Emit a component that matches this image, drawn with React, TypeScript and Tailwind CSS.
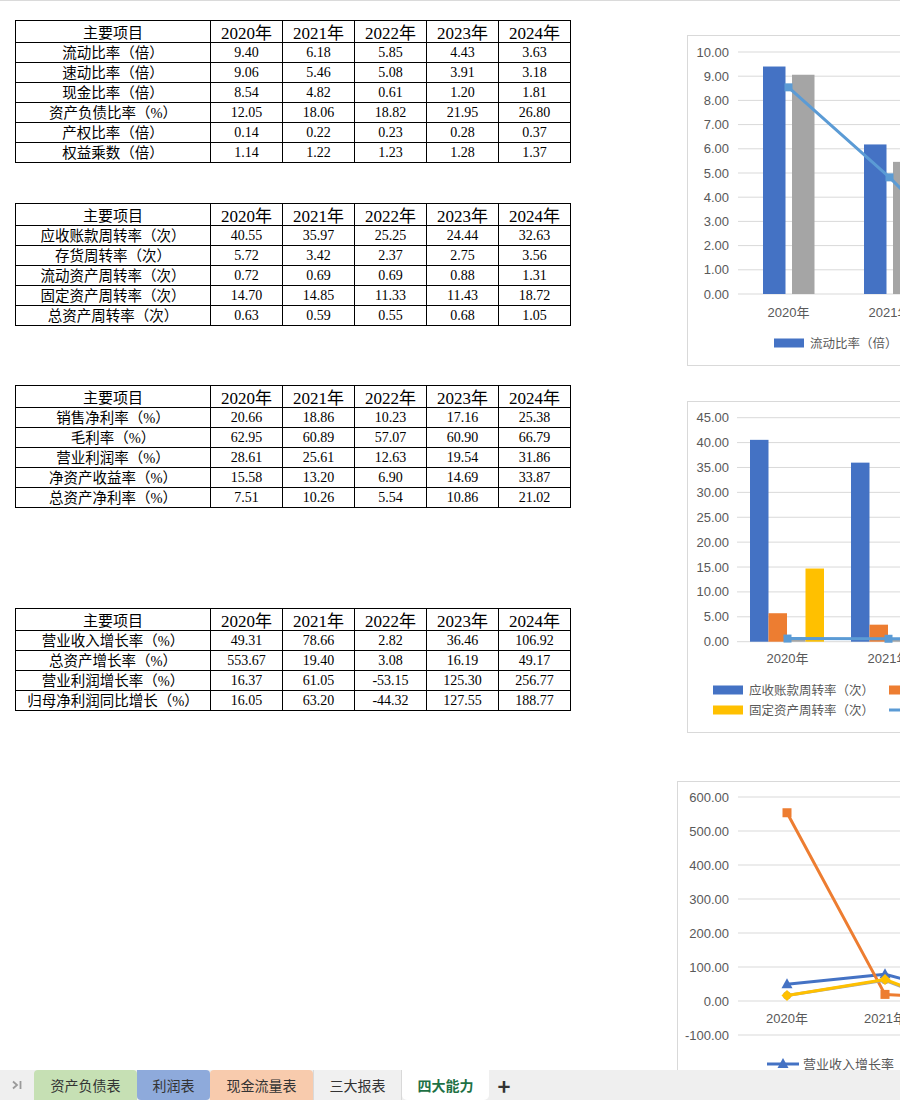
import React from 'react'

const years = ['2020年', '2021年', '2022年', '2023年', '2024年']

const solvency = [
  ['流动比率（倍）', '9.40', '6.18', '5.85', '4.43', '3.63'],
  ['速动比率（倍）', '9.06', '5.46', '5.08', '3.91', '3.18'],
  ['现金比率（倍）', '8.54', '4.82', '0.61', '1.20', '1.81'],
  ['资产负债比率（%）', '12.05', '18.06', '18.82', '21.95', '26.80'],
  ['产权比率（倍）', '0.14', '0.22', '0.23', '0.28', '0.37'],
  ['权益乘数（倍）', '1.14', '1.22', '1.23', '1.28', '1.37'],
]

const operation = [
  ['应收账款周转率（次）', '40.55', '35.97', '25.25', '24.44', '32.63'],
  ['存货周转率（次）', '5.72', '3.42', '2.37', '2.75', '3.56'],
  ['流动资产周转率（次）', '0.72', '0.69', '0.69', '0.88', '1.31'],
  ['固定资产周转率（次）', '14.70', '14.85', '11.33', '11.43', '18.72'],
  ['总资产周转率（次）', '0.63', '0.59', '0.55', '0.68', '1.05'],
]

const profit = [
  ['销售净利率（%）', '20.66', '18.86', '10.23', '17.16', '25.38'],
  ['毛利率（%）', '62.95', '60.89', '57.07', '60.90', '66.79'],
  ['营业利润率（%）', '28.61', '25.61', '12.63', '19.54', '31.86'],
  ['净资产收益率（%）', '15.58', '13.20', '6.90', '14.69', '33.87'],
  ['总资产净利率（%）', '7.51', '10.26', '5.54', '10.86', '21.02'],
]

const growth = [
  ['营业收入增长率（%）', '49.31', '78.66', '2.82', '36.46', '106.92'],
  ['总资产增长率（%）', '553.67', '19.40', '3.08', '16.19', '49.17'],
  ['营业利润增长率（%）', '16.37', '61.05', '-53.15', '125.30', '256.77'],
  ['归母净利润同比增长（%）', '16.05', '63.20', '-44.32', '127.55', '188.77'],
]

const C = {
  blue: '#4472c4',
  orange: '#ed7d31',
  gray: '#a5a5a5',
  yellow: '#ffc000',
  sky: '#5b9bd5',
  grid: '#d9d9d9',
  text: '#595959',
}

const num = (rows: string[][], i: number) => rows[i].slice(1).map(Number)

const SheetTable = ({ rows, className }: { rows: string[][]; className: string }) => (
  <div
    className={`grid grid-cols-[195px_72px_72px_72px_72px_72px] w-[556px] border-l border-t border-black text-black font-['Liberation_Serif','Noto_Sans_CJK_SC',serif] ${className}`}
  >
    <div className="h-[22px] border-r border-b border-black flex items-center justify-center pt-[4px] text-[15px] leading-none">
      主要项目
    </div>
    {years.map((y) => (
      <div
        key={y}
        className="h-[22px] border-r border-b border-black flex items-center justify-center pt-[3px] text-[17px] leading-none"
      >
        {y}
      </div>
    ))}
    {rows.map((row) =>
      row.map((cell, i) => (
        <div
          key={row[0] + i}
          className={`h-[20px] border-r border-b border-black flex items-center justify-center pt-[1px] leading-none whitespace-nowrap ${i === 0 ? 'text-[14.5px]' : 'text-[14px]'}`}
        >
          {cell}
        </div>
      ))
    )}
  </div>
)

const Square = ({ x, y, color, s = 8 }: { x: number; y: number; color: string; s?: number }) => (
  <rect x={x - s / 2} y={y - s / 2} width={s} height={s} fill={color} />
)

const Swatch = ({ x, y, color }: { x: number; y: number; color: string }) => (
  <rect x={x} y={y - 4.5} width={30} height={9} fill={color} />
)

const LiquidityChart = () => {
  const y = (v: number) => 258 - v * 24.2
  const cx = (i: number) => 100.5 + i * 101
  const cur = num(solvency, 0)
  const quick = num(solvency, 1)
  const cash = num(solvency, 2)
  return (
    <div className="ml-[10px] w-[600px] h-[331px] shrink-0 border border-[#d9d9d9] bg-white">
      <svg width="598" height="329" className="block font-['Liberation_Sans','Noto_Sans_CJK_SC',sans-serif]">
        {Array.from({ length: 11 }, (_, v) => (
          <g key={v}>
            <line x1={50} x2={598} y1={y(v)} y2={y(v)} stroke={C.grid} />
            <text x={41} y={y(v) + 4.5} textAnchor="end" fontSize={13} fill={C.text}>
              {v.toFixed(2)}
            </text>
          </g>
        ))}
        {cur.map((v, i) => (
          <rect key={'c' + i} x={cx(i) - 25.5} y={y(v)} width={22.5} height={y(0) - y(v)} fill={C.blue} />
        ))}
        {quick.map((v, i) => (
          <rect key={'q' + i} x={cx(i) + 3.5} y={y(v)} width={22.5} height={y(0) - y(v)} fill={C.gray} />
        ))}
        <polyline
          points={cash.map((v, i) => `${cx(i)},${y(v)}`).join(' ')}
          fill="none"
          stroke={C.sky}
          strokeWidth={3}
          strokeLinejoin="round"
        />
        {cash.map((v, i) => (
          <Square key={'m' + i} x={cx(i)} y={y(v)} color={C.sky} />
        ))}
        {years.map((yr, i) => (
          <text key={yr} x={cx(i)} y={281} textAnchor="middle" fontSize={13} fill={C.text}>
            {yr}
          </text>
        ))}
        <Swatch x={86} y={307} color={C.blue} />
        <text x={122} y={312} fontSize={12.5} fill={C.text}>流动比率（倍）</text>
        <Swatch x={228} y={307} color={C.gray} />
        <text x={264} y={312} fontSize={12.5} fill={C.text}>速动比率（倍）</text>
        <line x1={370} x2={400} y1={307} y2={307} stroke={C.sky} strokeWidth={3} />
        <Square x={385} y={307} color={C.sky} s={7} />
        <text x={406} y={312} fontSize={12.5} fill={C.text}>现金比率（倍）</text>
      </svg>
    </div>
  )
}

const TurnoverChart = () => {
  const y = (v: number) => 239.7 - v * 4.978
  const cx = (i: number) => 99.5 + i * 101
  const bars = [
    { data: num(operation, 0), color: C.blue },
    { data: num(operation, 1), color: C.orange },
    { data: num(operation, 2), color: C.gray },
    { data: num(operation, 3), color: C.yellow },
  ]
  const total = num(operation, 4)
  return (
    <div className="ml-[10px] mt-[35px] w-[600px] h-[332px] shrink-0 border border-[#d9d9d9] bg-white">
      <svg width="598" height="330" className="block font-['Liberation_Sans','Noto_Sans_CJK_SC',sans-serif]">
        {Array.from({ length: 10 }, (_, k) => (
          <g key={k}>
            <line x1={49} x2={598} y1={y(k * 5)} y2={y(k * 5)} stroke={C.grid} />
            <text x={41} y={y(k * 5) + 4.5} textAnchor="end" fontSize={13} fill={C.text}>
              {(k * 5).toFixed(2)}
            </text>
          </g>
        ))}
        {bars.map((b, k) =>
          b.data.map((v, i) => (
            <rect
              key={k + '-' + i}
              x={cx(i) - 37.5 + k * 18.5}
              y={y(v)}
              width={18.5}
              height={y(0) - y(v)}
              fill={b.color}
            />
          ))
        )}
        <polyline
          points={total.map((v, i) => `${cx(i)},${y(v)}`).join(' ')}
          fill="none"
          stroke={C.sky}
          strokeWidth={3}
        />
        {total.map((v, i) => (
          <Square key={'t' + i} x={cx(i)} y={y(v)} color={C.sky} />
        ))}
        {years.map((yr, i) => (
          <text key={yr} x={cx(i)} y={261} textAnchor="middle" fontSize={13} fill={C.text}>
            {yr}
          </text>
        ))}
        <Swatch x={25} y={288} color={C.blue} />
        <text x={61} y={293} fontSize={12.5} fill={C.text}>应收账款周转率（次）</text>
        <Swatch x={201} y={288} color={C.orange} />
        <text x={237} y={293} fontSize={12.5} fill={C.text}>存货周转率（次）</text>
        <Swatch x={352} y={288} color={C.gray} />
        <text x={388} y={293} fontSize={12.5} fill={C.text}>流动资产周转率（次）</text>
        <Swatch x={25} y={308} color={C.yellow} />
        <text x={61} y={313} fontSize={12.5} fill={C.text}>固定资产周转率（次）</text>
        <line x1={201} x2={231} y1={308} y2={308} stroke={C.sky} strokeWidth={3} />
        <Square x={216} y={308} color={C.sky} s={7} />
        <text x={237} y={313} fontSize={12.5} fill={C.text}>总资产周转率（次）</text>
      </svg>
    </div>
  )
}

const Triangle = ({ x, y, color }: { x: number; y: number; color: string }) => (
  <polygon points={`${x},${y - 6} ${x - 5.5},${y + 4} ${x + 5.5},${y + 4}`} fill={color} />
)

const Diamond = ({ x, y, color }: { x: number; y: number; color: string }) => (
  <polygon points={`${x},${y - 5.5} ${x + 5.5},${y} ${x},${y + 5.5} ${x - 5.5},${y}`} fill={color} />
)

const GrowthChart = () => {
  const y = (v: number) => 219 - v * 0.34
  const cx = (i: number) => 109 + i * 98
  const series = [
    { data: num(growth, 0), color: C.blue, mark: 'tri' },
    { data: num(growth, 1), color: C.orange, mark: 'sq' },
    { data: num(growth, 2), color: C.gray, mark: 'dot' },
    { data: num(growth, 3), color: C.yellow, mark: 'dia' },
  ]
  return (
    <div className="mt-[48px] w-[600px] h-[340px] shrink-0 border border-[#d9d9d9] bg-white">
      <svg width="598" height="338" className="block font-['Liberation_Sans','Noto_Sans_CJK_SC',sans-serif]">
        {Array.from({ length: 8 }, (_, k) => {
          const v = 600 - k * 100
          return (
            <g key={k}>
              <line x1={60} x2={598} y1={y(v)} y2={y(v)} stroke={C.grid} />
              <text x={51} y={y(v) + 4.5} textAnchor="end" fontSize={13} fill={C.text}>
                {v.toFixed(2)}
              </text>
            </g>
          )
        })}
        {series.map((s) => (
          <g key={s.color}>
            <polyline
              points={s.data.map((v, i) => `${cx(i)},${y(v)}`).join(' ')}
              fill="none"
              stroke={s.color}
              strokeWidth={3}
              strokeLinejoin="round"
            />
            {s.data.map((v, i) =>
              s.mark === 'tri' ? (
                <Triangle key={i} x={cx(i)} y={y(v)} color={s.color} />
              ) : s.mark === 'sq' ? (
                <Square key={i} x={cx(i)} y={y(v)} color={s.color} s={9} />
              ) : s.mark === 'dia' ? (
                <Diamond key={i} x={cx(i)} y={y(v)} color={s.color} />
              ) : (
                <circle key={i} cx={cx(i)} cy={y(v)} r={4} fill={s.color} />
              )
            )}
          </g>
        ))}
        {years.map((yr, i) => (
          <text key={yr} x={cx(i)} y={241} textAnchor="middle" fontSize={13} fill={C.text}>
            {yr}
          </text>
        ))}
        <line x1={89} x2={121} y1={282} y2={282} stroke={C.blue} strokeWidth={3} />
        <Triangle x={105} y={282} color={C.blue} />
        <text x={125} y={287} fontSize={13} fill={C.text}>营业收入增长率</text>
        <line x1={240} x2={272} y1={282} y2={282} stroke={C.orange} strokeWidth={3} />
        <Square x={256} y={282} color={C.orange} />
        <text x={276} y={287} fontSize={13} fill={C.text}>总资产增长率</text>
      </svg>
    </div>
  )
}

const Tab = ({ label, className }: { label: string; className: string }) => (
  <div className={`flex items-center justify-center shrink-0 ${className}`}>{label}</div>
)

export default function App() {
  return (
    <div className="w-[900px] h-[1100px] overflow-hidden bg-white flex flex-col">
      <div className="h-px bg-[#dadada] shrink-0" />
      <div className="flex-1 min-h-0 overflow-hidden flex">
        <div className="w-[571px] shrink-0 pl-[15px] pt-[19px]">
          <SheetTable rows={solvency} className="" />
          <SheetTable rows={operation} className="mt-[40px]" />
          <SheetTable rows={profit} className="mt-[59px]" />
          <SheetTable rows={growth} className="mt-[100px]" />
        </div>
        <div className="ml-[106px] pt-[34px] flex flex-col shrink-0">
          <LiquidityChart />
          <TurnoverChart />
          <GrowthChart />
        </div>
      </div>
      <div className="h-[30px] shrink-0 flex bg-[#efefef] text-[14px] text-[#333] font-['Noto_Sans_CJK_SC','Liberation_Sans',sans-serif]">
        <div className="w-[34px] shrink-0 flex items-center justify-center">
          <svg width="12" height="12" viewBox="0 0 12 12">
            <path d="M2 2.5 L6 6 L2 9.5" fill="none" stroke="#9a9a9a" strokeWidth="1.8" />
            <line x1="9.5" y1="2" x2="9.5" y2="10" stroke="#9a9a9a" strokeWidth="1.8" />
          </svg>
        </div>
        <Tab label="资产负债表" className="w-[103px] bg-[#c6e0b4] rounded-t-[4px]" />
        <Tab label="利润表" className="w-[73px] bg-[#8eaadb] rounded-[4px] rounded-tl-none" />
        <Tab label="现金流量表" className="w-[103px] bg-[#f8cbad] rounded-t-[4px]" />
        <Tab label="三大报表" className="w-[89px] bg-[#f0f0f0] border-x border-[#d9d9d9]" />
        <Tab label="四大能力" className="w-[87px] bg-white rounded-b-[5px] font-bold text-[#1e7145]" />
        <div className="w-[30px] shrink-0 flex items-center justify-center text-[22px] font-bold leading-none text-[#333]">
          +
        </div>
      </div>
    </div>
  )
}
